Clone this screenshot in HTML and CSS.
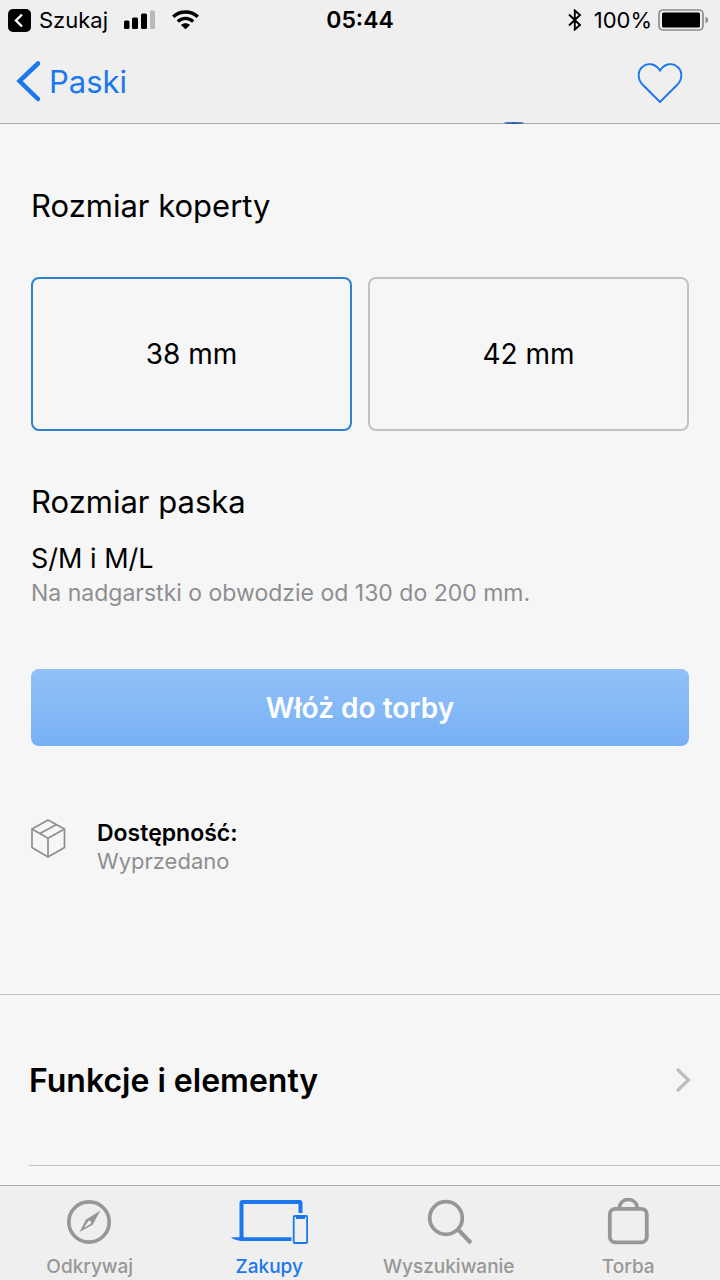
FILE: index.html
```html
<!DOCTYPE html>
<html lang="pl">
<head>
<meta charset="utf-8">
<meta name="viewport" content="width=device-width, initial-scale=1">
<title>Paski</title>
<link rel="stylesheet" href="styles.css">
</head>
<body>
<header class="top">
  <div class="status">
    <div class="status-side">
      <button class="return" type="button">
        <svg width="23" height="23" viewBox="0 0 23 23" aria-hidden="true"><rect width="23" height="23" rx="5"/><path d="M14 5.500 8 11.500l6 6" fill="none" stroke="#fff" stroke-width="2.400"/></svg>
        <span>Szukaj</span>
      </button>
      <svg width="32" height="20" viewBox="0 0 32 20" aria-hidden="true"><rect y="10.500" width="5.500" height="8.500" rx="1.500"/><rect x="8" y="7.500" width="6" height="11.500" rx="1.500"/><rect x="17" y="3.500" width="6" height="15.500" rx="1.500"/><rect x="26" y="0.500" width="5" height="18.500" rx="1" fill="#b9b9b9"/></svg>
      <svg width="27" height="20" viewBox="0 0 27 20" aria-hidden="true"><path d="M1.200 6.800C8 .4 19 .4 25.800 6.800" fill="none" stroke="#000" stroke-width="3.400"/><path d="M5.800 11.500c4.400-4.100 11-4.100 15.400 0" fill="none" stroke="#000" stroke-width="3.200"/><path d="M13.500 19.300 8.900 15c2.700-2.300 6.500-2.300 9.200 0z"/></svg>
    </div>
    <time class="clock">05:44</time>
    <div class="status-side status-end">
      <svg width="14" height="22" viewBox="0 0 14 22" aria-hidden="true"><path d="M1 5.500 12 16 6.800 20.500v-19L12 6 1 16.500" fill="none" stroke="#000" stroke-width="1.900"/></svg>
      <span class="charge">100%</span>
      <svg width="54" height="22" viewBox="0 0 54 22" aria-hidden="true"><rect x="1" y="1" width="44" height="20" rx="4" fill="none" stroke="#8d8d8d" stroke-width="1.700"/><rect x="4" y="3.500" width="38" height="15" rx="1.500"/><path d="M47.500 7.500c3.500 1.500 3.500 5.500 0 7z" fill="#8d8d8d"/></svg>
    </div>
  </div>
  <nav class="bar">
    <a class="back" href="#paski">
      <svg width="24" height="42" viewBox="0 0 24 42" aria-hidden="true"><path d="M22 2.500 3.500 20 22 38" fill="none" stroke="currentColor" stroke-width="4.500" stroke-linecap="round"/></svg>
      <span>Paski</span>
    </a>
    <button class="favorite" type="button" aria-label="Dodaj do ulubionych">
      <svg width="46" height="42" viewBox="0 0 46 42" aria-hidden="true"><path d="M23 41 5.500 23.500C.5 18 .5 10.500 5 6.200 10.500 1 18.500 2.500 23 9.500 27.500 2.500 35.500 1 41 6.200 45.500 10.500 45.500 18 40.500 23.500z" fill="none" stroke="currentColor" stroke-width="1.900"/></svg>
    </button>
  </nav>
  <span class="swatch-edge"></span>
</header>

<main class="content">
  <section class="product">
    <form>
      <fieldset class="sizes">
        <legend class="heading">Rozmiar koperty</legend>
        <div class="options">
          <label class="option"><input type="radio" name="case" checked><span>38 mm</span></label>
          <label class="option"><input type="radio" name="case"><span>42 mm</span></label>
        </div>
      </fieldset>
      <h2 class="heading">Rozmiar paska</h2>
      <p class="band">S/M i M/L</p>
      <p class="note">Na nadgarstki o obwodzie od 130 do 200 mm.</p>
      <button class="add" type="button">Włóż do torby</button>
    </form>
    <div class="availability">
      <svg width="36" height="40" viewBox="0 0 36 40" aria-hidden="true"><path d="M17 1 33.500 10v18.500L17 38 1 28.500V10zM1 10l16 9.200L33.500 10M17 19.200V38M9 14.600 25.500 5.600" fill="none" stroke="#8e8e91" stroke-width="1.700" stroke-linejoin="round"/></svg>
      <dl class="facts">
        <dt>Dostępność:</dt>
        <dd>Wyprzedano</dd>
      </dl>
    </div>
  </section>
  <section class="more">
    <a class="row" href="#funkcje">
      <span>Funkcje i elementy</span>
      <svg width="16" height="26" viewBox="0 0 16 26" aria-hidden="true"><path d="M2 2l11.500 11L2 24" fill="none" stroke="#bcbcc0" stroke-width="3.200"/></svg>
    </a>
  </section>
</main>

<nav class="tabs">
  <a class="tab" href="#odkrywaj">
    <svg width="48" height="48" viewBox="0 0 48 48" aria-hidden="true"><circle cx="23" cy="24" r="20.200" fill="none" stroke="currentColor" stroke-width="3.700"/><path fill="currentColor" fill-rule="evenodd" d="M34.500 12.500 26.500 27 13.500 34 20 21.500zM22.300 23 18 30l6.700-4.200c1.400-1.800-.6-3.800-2.400-2.800z"/></svg>
    <span>Odkrywaj</span>
  </a>
  <a class="tab tab-current" href="#zakupy" aria-current="page">
    <svg width="78" height="48" viewBox="0 0 78 48" aria-hidden="true"><path d="M11.500 40V5a1 1 0 0 1 1-1h57a1 1 0 0 1 1 1v10" fill="none" stroke="currentColor" stroke-width="4"/><path d="M1 39.200h60.500v3.900H14C7 43 3 41 1 39.200z" fill="currentColor"/><rect x="63.700" y="18" width="13.400" height="27" rx="1" fill="none" stroke="currentColor" stroke-width="1.800"/><path d="M66 18h9v3h-9z" fill="currentColor"/></svg>
    <span>Zakupy</span>
  </a>
  <a class="tab" href="#wyszukiwanie">
    <svg width="48" height="48" viewBox="0 0 48 48" aria-hidden="true"><circle cx="21" cy="20" r="16.300" fill="none" stroke="currentColor" stroke-width="3.800"/><path d="M33.500 32 46 45" stroke="currentColor" stroke-width="4"/></svg>
    <span>Wyszukiwanie</span>
  </a>
  <a class="tab" href="#torba">
    <svg width="48" height="48" viewBox="0 0 48 48" aria-hidden="true"><rect x="5.800" y="10.800" width="37" height="33.500" rx="5.500" fill="none" stroke="currentColor" stroke-width="3.800"/><path d="M15.300 10.500c0-12 18-12 18 0" fill="none" stroke="currentColor" stroke-width="3.600"/></svg>
    <span>Torba</span>
  </a>
</nav>
</body>
</html>
```
FILE: styles.css
```css
* {
  box-sizing: border-box;
}

body {
  margin: 0;
  min-height: 100vh;
  display: flex;
  flex-direction: column;
  background: #f6f6f6;
  color: #000;
  font-family: Inter, "Liberation Sans", sans-serif;
  font-size: 22px;
}

button {
  border: 0;
  padding: 0;
  background: none;
  color: inherit;
  font: inherit;
}

a {
  color: inherit;
  text-decoration: none;
}

svg {
  display: block;
  flex: none;
}

h2,
p,
dl,
dd {
  margin: 0;
}

.top {
  position: sticky;
  top: 0;
  z-index: 1;
  background: #efefef;
  border-bottom: 1px solid #a9abab;
}

.status {
  display: flex;
  align-items: center;
  height: 40px;
  padding: 0 8px;
}

.status-side {
  flex: 1;
  display: flex;
  align-items: center;
  gap: 16px;
}

.status-end {
  justify-content: flex-end;
  gap: 6px;
}

.return {
  display: flex;
  align-items: center;
  gap: 8px;
}

.charge {
  margin-left: 6px;
}

.clock {
  font-size: 23px;
  font-weight: 600;
}

.bar {
  display: flex;
  align-items: center;
  justify-content: space-between;
  height: 83px;
  padding: 0 37px 0 16px;
  color: #1a77ee;
}

.back {
  display: flex;
  align-items: center;
  gap: 9px;
  font-size: 31px;
}

.swatch-edge {
  position: absolute;
  bottom: -1px;
  left: 70%;
  width: 20px;
  height: 2px;
  border-radius: 50%;
  background: #2b63a8;
}

.content {
  flex: 1;
}

.product {
  padding: 62px 31px 119px;
  border-bottom: 1px solid #c3c3c5;
}

.sizes {
  min-width: 0;
  margin: 0 0 51px;
  padding: 0;
  border: 0;
}

.heading {
  padding: 0;
  font-size: 31px;
  font-weight: 400;
  line-height: 40px;
}

.options {
  display: grid;
  grid-template-columns: 1fr 1fr;
  gap: 16px;
  margin-top: 51px;
}

.option {
  position: relative;
  display: flex;
  align-items: center;
  justify-content: center;
  height: 154px;
  border: 2px solid #c2c2c2;
  border-radius: 8px;
  font-size: 28px;
}

.option:has(:checked) {
  border-color: #2f81d0;
}

.option input {
  position: absolute;
  inset: 0;
  width: 100%;
  height: 100%;
  margin: 0;
  opacity: 0;
}

.band {
  margin-top: 19px;
  font-size: 27px;
  line-height: 36px;
}

.note {
  font-size: 23px;
  line-height: 32px;
  color: #8e8e91;
}

.add {
  display: block;
  width: 100%;
  height: 77px;
  margin-top: 60px;
  border-radius: 8px;
  background: linear-gradient(#91c1f7, #79b1f5);
  color: #fff;
  font-size: 28px;
  font-weight: 600;
}

.availability {
  display: flex;
  gap: 30px;
  margin-top: 73px;
}

.facts {
  line-height: 28px;
}

.facts dt {
  font-size: 23px;
  font-weight: 600;
}

.facts dd {
  color: #8e8e91;
}

.more {
  padding-left: 29px;
}

.row {
  display: flex;
  align-items: center;
  justify-content: space-between;
  height: 171px;
  padding-right: 29px;
  border-bottom: 1px solid #c3c3c5;
  font-size: 32px;
  font-weight: 600;
}

.tabs {
  position: sticky;
  bottom: 0;
  display: grid;
  grid-template-columns: repeat(4, 1fr);
  height: 95px;
  padding: 12px 2px 0 0;
  border-top: 1px solid #a9abab;
  background: #efefef;
}

.tab {
  display: flex;
  flex-direction: column;
  align-items: center;
  gap: 9px;
  color: #979797;
  font-size: 19px;
  font-weight: 500;
  line-height: 24px;
}

.tab-current {
  color: #1a77ee;
}
```
